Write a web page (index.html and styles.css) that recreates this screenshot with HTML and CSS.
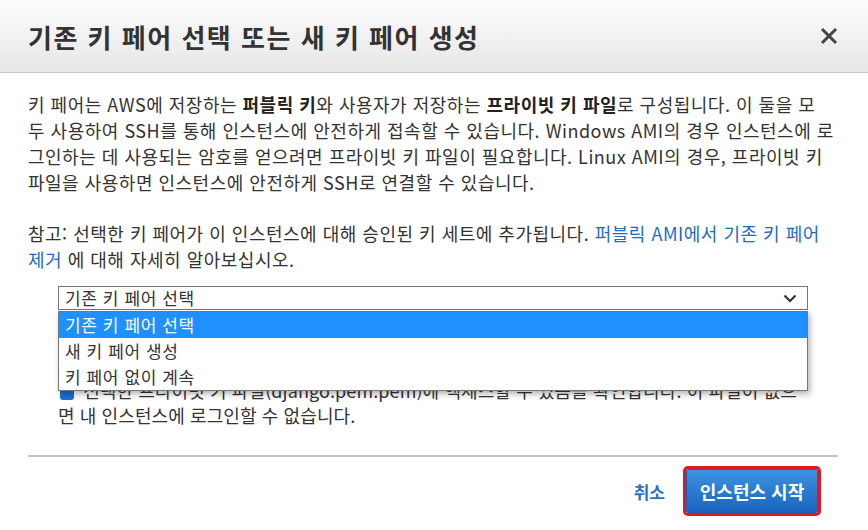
FILE: index.html
```html
<!DOCTYPE html>
<html lang="ko">
<head>
    <meta charset="UTF-8">
    <meta name="viewport" content="width=device-width, initial-scale=1.0">
    <title>키 페어 선택</title>
    <link rel="stylesheet" href="styles.css">
</head>
<body>

    <div class="modal">
        <div class="modal-header">
            <h2>기존 키 페어 선택 또는 새 키 페어 생성</h2>
            <button class="close" type="button" aria-label="닫기">
                <svg width="18" height="18" viewBox="0 0 18 18"><path d="M2 2L16 16M16 2L2 16" stroke="#444" stroke-width="3" fill="none"/></svg>
            </button>
        </div>

        <div class="modal-body">
            <p>키 페어는 AWS에 저장하는 <b>퍼블릭 키</b>와 사용자가 저장하는 <b>프라이빗 키 파일</b>로 구성됩니다. 이 둘을 모<br>두 사용하여 SSH를 통해 인스턴스에 안전하게 접속할 수 있습니다. Windows AMI의 경우 인스턴스에 로<br>그인하는 데 사용되는 암호를 얻으려면 프라이빗 키 파일이 필요합니다. Linux AMI의 경우, 프라이빗 키<br>파일을 사용하면 인스턴스에 안전하게 SSH로 연결할 수 있습니다.</p>

            <p>참고: 선택한 키 페어가 이 인스턴스에 대해 승인된 키 세트에 추가됩니다. <a href="#">퍼블릭 AMI에서 기존 키 페어<br>제거</a> 에 대해 자세히 알아보십시오.</p>

            <div class="key-select">
                <div class="select">
                    <span>기존 키 페어 선택</span>
                    <svg width="14" height="9" viewBox="0 0 14 9"><path d="M1.5 1.5L7 7L12.5 1.5" stroke="#333" stroke-width="2.2" fill="none"/></svg>
                </div>
                <ul class="options">
                    <li class="active">기존 키 페어 선택</li>
                    <li>새 키 페어 생성</li>
                    <li>키 페어 없이 계속</li>
                </ul>
                <label class="ack">
                    <span class="check"></span>
                    선택한 프라이빗 키 파일(django.pem.pem)에 액세스할 수 있음을 확인합니다. 이 파일이 없으<br>면 내 인스턴스에 로그인할 수 없습니다.
                </label>
            </div>
        </div>

        <div class="modal-footer">
            <a href="#" class="cancel">취소</a>
            <button type="button" class="launch">인스턴스 시작</button>
        </div>
    </div>

</body>
</html>
```

FILE: styles.css
```css
body {
    font-family: "Noto Sans CJK KR", "Liberation Sans", sans-serif;
    background-color: white;
    color: #333;
    margin: 0;
    padding: 0;
}

.modal {
    width: 868px;
    height: 530px;
    background-color: white;
}

.modal-header {
    height: 72px;
    display: flex;
    align-items: center;
    justify-content: space-between;
    padding: 0 30px 0 28px;
    background: linear-gradient(to bottom, #fdfdfd, #e6e6e6);
    border-bottom: 1px solid #c9c9c9;
}

.modal-header h2 {
    margin: 0;
    font-size: 26px;
    font-weight: 700;
    color: #333;
    letter-spacing: 1.5px;
}

.close {
    background: none;
    border: none;
    padding: 0;
    display: flex;
    cursor: pointer;
}

.modal-body {
    padding: 18px 20px 0 28px;
    font-size: 18px;
    letter-spacing: 0.5px;
    line-height: 26px;
}

.modal-body p {
    margin: 0 0 25px;
}

.modal-body b {
    font-weight: 700;
    color: #222;
}

.modal-body a {
    color: #1e6bc6;
    text-decoration: none;
}

.key-select {
    position: relative;
    margin: -11px 40px 0 30px;
}

.select {
    height: 22px;
    border: 1px solid #767676;
    display: flex;
    align-items: center;
    justify-content: space-between;
    padding: 0 10px 0 6px;
    font-size: 17px;
    letter-spacing: 0.6px;
}

.options {
    position: absolute;
    top: 25px;
    left: 0;
    right: 0;
    margin: 0;
    padding: 0;
    list-style: none;
    background-color: white;
    border: 1px solid #767676;
    box-shadow: 2px 3px 6px rgba(0, 0, 0, 0.3);
    z-index: 2;
}

.options li {
    height: 26px;
    line-height: 26px;
    padding: 0 6px;
    font-size: 17px;
    letter-spacing: 0.6px;
}

.options li.active {
    background-color: #1e90ff;
    color: white;
}

.ack {
    display: block;
    margin-top: 68px;
    margin-right: -20px;
    line-height: 25px;
    letter-spacing: 0.1px;
}

.check {
    display: inline-block;
    width: 14px;
    height: 14px;
    margin: 0 4px 0 2px;
    vertical-align: -2px;
    background-color: #1a6fd4;
    border-radius: 3px;
}

.modal-footer {
    display: flex;
    justify-content: flex-end;
    align-items: center;
    gap: 21px;
    margin: 27px 30px 0 28px;
    padding: 12px 20px 0 0;
    border-top: 2px solid #c3c3c3;
}

.cancel {
    color: #2c6fcc;
    font-weight: 700;
    font-size: 17px;
    text-decoration: none;
}

.launch {
    width: 132px;
    height: 44px;
    font-family: "Noto Sans CJK KR", sans-serif;
    font-size: 18px;
    font-weight: 700;
    color: white;
    background: linear-gradient(to bottom, #3c93e3, #1a64bd);
    border: 1px solid #1c5fae;
    border-radius: 2px;
    outline: 3px solid #e5161e;
    cursor: pointer;
}
```
